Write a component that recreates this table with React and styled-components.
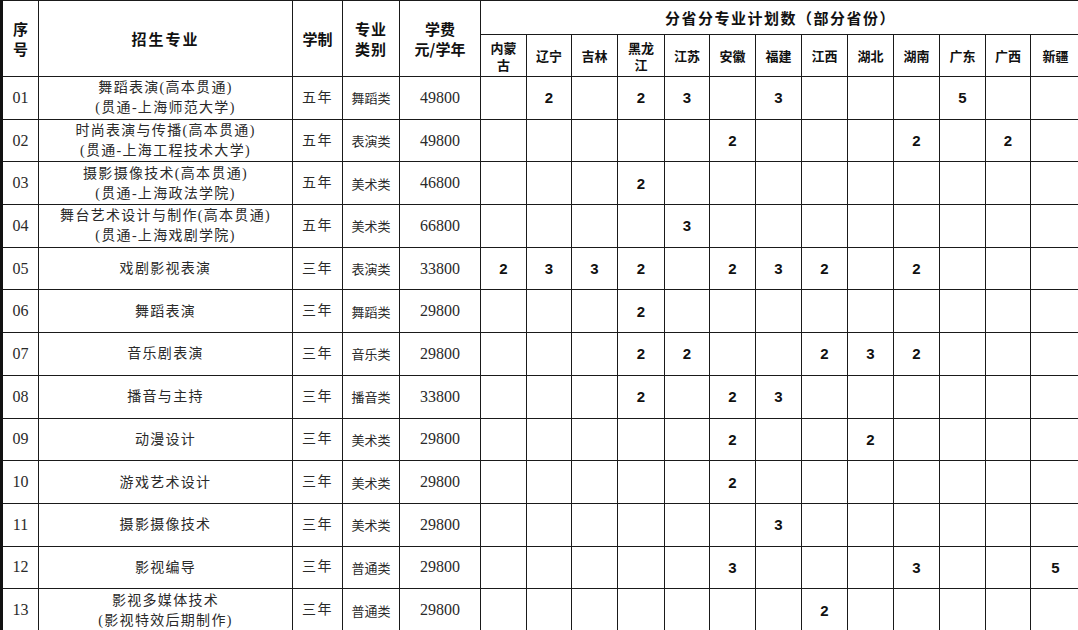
import React from "react";
import styled, { createGlobalStyle } from "styled-components";

const GlobalStyle = createGlobalStyle`
  html, body {
    margin: 0;
    padding: 0;
    background: #fff;
  }
  #root {
    width: 1078px;
    height: 630px;
    overflow: hidden;
  }
`;

const provinces = [
  ["内蒙", "古"], ["辽宁"], ["吉林"], ["黑龙", "江"], ["江苏"], ["安徽"], ["福建"],
  ["江西"], ["湖北"], ["湖南"], ["广东"], ["广西"], ["新疆"],
];

// widths of the columns, taken from the grid lines of the sheet
const colWidths = [37, 254, 50, 57, 81, 46, 45, 46, 47, 45, 46, 46, 46, 46, 46, 46, 45, 50];

// plan: index of province -> number
const rows = [
  { no: "01", name: ["舞蹈表演(高本贯通)", "(贯通-上海师范大学)"], years: "五年", cat: "舞蹈类", fee: "49800", plan: { 1: 2, 3: 2, 4: 3, 6: 3, 10: 5 } },
  { no: "02", name: ["时尚表演与传播(高本贯通)", "(贯通-上海工程技术大学)"], years: "五年", cat: "表演类", fee: "49800", plan: { 5: 2, 9: 2, 11: 2 } },
  { no: "03", name: ["摄影摄像技术(高本贯通)", "(贯通-上海政法学院)"], years: "五年", cat: "美术类", fee: "46800", plan: { 3: 2 } },
  { no: "04", name: ["舞台艺术设计与制作(高本贯通)", "(贯通-上海戏剧学院)"], years: "五年", cat: "美术类", fee: "66800", plan: { 4: 3 } },
  { no: "05", name: ["戏剧影视表演"], years: "三年", cat: "表演类", fee: "33800", plan: { 0: 2, 1: 3, 2: 3, 3: 2, 5: 2, 6: 3, 7: 2, 9: 2 } },
  { no: "06", name: ["舞蹈表演"], years: "三年", cat: "舞蹈类", fee: "29800", plan: { 3: 2 } },
  { no: "07", name: ["音乐剧表演"], years: "三年", cat: "音乐类", fee: "29800", plan: { 3: 2, 4: 2, 7: 2, 8: 3, 9: 2 } },
  { no: "08", name: ["播音与主持"], years: "三年", cat: "播音类", fee: "33800", plan: { 3: 2, 5: 2, 6: 3 } },
  { no: "09", name: ["动漫设计"], years: "三年", cat: "美术类", fee: "29800", plan: { 5: 2, 8: 2 } },
  { no: "10", name: ["游戏艺术设计"], years: "三年", cat: "美术类", fee: "29800", plan: { 5: 2 } },
  { no: "11", name: ["摄影摄像技术"], years: "三年", cat: "美术类", fee: "29800", plan: { 6: 3 } },
  { no: "12", name: ["影视编导"], years: "三年", cat: "普通类", fee: "29800", plan: { 5: 3, 9: 3, 12: 5 } },
  { no: "13", name: ["影视多媒体技术", "(影视特效后期制作)"], years: "三年", cat: "普通类", fee: "29800", plan: { 7: 2 } },
];

const Sheet = styled.table`
  border-collapse: collapse;
  table-layout: fixed;
  width: 1080px;
  border-left: 3px solid #111;
  border-top: 1px solid #222;
  background: #fff;
`;

const HeadRow = styled.tr`
  height: ${(p) => p.$h}px;
`;

const BodyRow = styled.tr`
  height: 42.7px;
`;

const HeadCell = styled.th`
  border: 1px solid #1a1a1a;
  padding: 0;
  text-align: center;
  vertical-align: middle;
  color: #111;
  font-family: "Noto Sans CJK SC", sans-serif;
  font-weight: 700;
  font-size: ${(p) => (p.$small ? 13 : 15)}px;
  line-height: ${(p) => (p.$small ? 17 : 20)}px;
  letter-spacing: ${(p) => p.$spacing || 0}px;
`;

const Cell = styled.td`
  border: 1px solid #1a1a1a;
  padding: 0;
  text-align: center;
  vertical-align: middle;
  color: #2a2a2a;
  white-space: nowrap;
  overflow: hidden;

  &.serif {
    font-family: "Liberation Serif", "DejaVu Serif", serif;
    font-size: 16px;
  }
  &.name {
    font-family: "Liberation Serif", "Noto Sans CJK SC", sans-serif;
    font-size: 14px;
    line-height: 20px;
    letter-spacing: 1.3px;
    font-weight: 400;
    padding-top: 1px;
  }
  &.years {
    font-family: "Noto Sans CJK SC", sans-serif;
    font-size: 14px;
    letter-spacing: 1.5px;
    padding-bottom: 4px;
  }
  &.cat {
    font-family: "Noto Sans CJK SC", sans-serif;
    font-size: 13px;
  }
  &.count {
    font-family: "Liberation Sans Narrow", "Liberation Sans", Arial, sans-serif;
    font-weight: 700;
    font-size: 15px;
    color: #111;
  }
`;

const Line = styled.div`
  display: block;
`;

export default function App() {
  return (
    <>
      <GlobalStyle />
      <Sheet>
        <colgroup>
          {colWidths.map((w, i) => (
            <col key={i} style={{ width: w }} />
          ))}
        </colgroup>
        <thead>
          <HeadRow $h={34}>
            <HeadCell rowSpan={2}>序<br />号</HeadCell>
            <HeadCell rowSpan={2} $spacing={2}>招生专业</HeadCell>
            <HeadCell rowSpan={2}>学制</HeadCell>
            <HeadCell rowSpan={2} $spacing={1}>专业<br />类别</HeadCell>
            <HeadCell rowSpan={2}>学费<br />元/学年</HeadCell>
            <HeadCell colSpan={13} $spacing={1.5}>分省分专业计划数（部分省份）</HeadCell>
          </HeadRow>
          <HeadRow $h={42}>
            {provinces.map((p, i) => (
              <HeadCell key={i} $small>
                {p[0]}
                {p[1] && <><br />{p[1]}</>}
              </HeadCell>
            ))}
          </HeadRow>
        </thead>
        <tbody>
          {rows.map((r) => (
            <BodyRow key={r.no}>
              <Cell className="serif">{r.no}</Cell>
              <Cell className="name">
                {r.name.map((t) => (
                  <Line key={t}>{t}</Line>
                ))}
              </Cell>
              <Cell className="years">{r.years}</Cell>
              <Cell className="cat">{r.cat}</Cell>
              <Cell className="serif">{r.fee}</Cell>
              {provinces.map((_, i) => (
                <Cell key={i} className="count">{r.plan[i] || ""}</Cell>
              ))}
            </BodyRow>
          ))}
        </tbody>
      </Sheet>
    </>
  );
}
